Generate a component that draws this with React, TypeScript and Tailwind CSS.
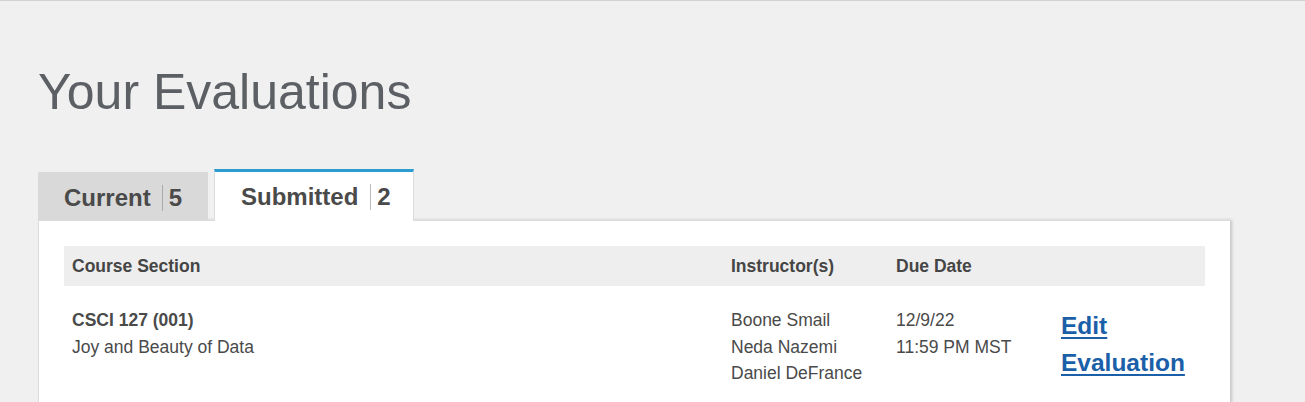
import React from "react";

export default function App() {
  return (
    <div className="h-[402px] overflow-hidden bg-[#f0f0f0] border-t border-[#d2d2d2] font-['Liberation_Sans',Arial,sans-serif]">
      <div className="pl-[38px] pr-[75px]">
        <h1 className="pt-[63px] text-[50px] leading-[56px] text-[#5c6065] font-normal">Your Evaluations</h1>
        <div className="mt-[49px] flex items-end gap-[6px]">
          <div className="w-[170px] h-[48px] bg-[#d9d9d9] flex items-center pl-[26px] pt-[4px] text-[24px] font-bold text-[#4a4a4a]">
            <span>Current</span>
            <span className="ml-[11px] mr-[6px] w-px h-[26px] bg-[#aaaaaa]"></span>
            <span>5</span>
          </div>
          <div className="relative z-10 -mb-px w-[200px] h-[52px] bg-white border-t-[3px] border-[#2d9cd0] border-x border-x-[#dcdcdc] flex items-center pl-[26px] text-[24px] font-bold text-[#4a4a4a]">
            <span>Submitted</span>
            <span className="ml-[12px] mr-[6px] w-px h-[26px] bg-[#bbbbbb]"></span>
            <span>2</span>
          </div>
        </div>
        <div className="bg-white border-t border-l border-[#dcdcdc] shadow-[2px_0_3px_rgba(0,0,0,0.18)] pl-[25px] pr-[25px] pt-[25px] pb-[40px]">
          <div className="grid grid-cols-[659px_165px_165px_1fr] bg-[#eeeeee] h-[40px] items-center text-[17.5px] font-bold text-[#454545]">
            <div className="pl-[8px]">Course Section</div>
            <div className="pl-[8px]">Instructor(s)</div>
            <div className="pl-[8px]">Due Date</div>
            <div></div>
          </div>
          <div className="grid grid-cols-[659px_165px_165px_1fr] pt-[21px] text-[17.5px] leading-[26.5px] text-[#4a4a4a]">
            <div className="pl-[8px]">
              <div className="font-bold">CSCI 127 (001)</div>
              <div>Joy and Beauty of Data</div>
            </div>
            <div className="pl-[8px]">
              <div>Boone Smail</div>
              <div>Neda Nazemi</div>
              <div>Daniel DeFrance</div>
            </div>
            <div className="pl-[8px]">
              <div>12/9/22</div>
              <div>11:59 PM MST</div>
            </div>
            <div className="pl-[8px]">
              <a href="#" className="text-[24.5px] leading-[37px] font-bold text-[#1b5fa8] underline underline-offset-[3px] decoration-[2px]">
                Edit
                <br />
                Evaluation
              </a>
            </div>
          </div>
        </div>
      </div>
    </div>
  );
}
